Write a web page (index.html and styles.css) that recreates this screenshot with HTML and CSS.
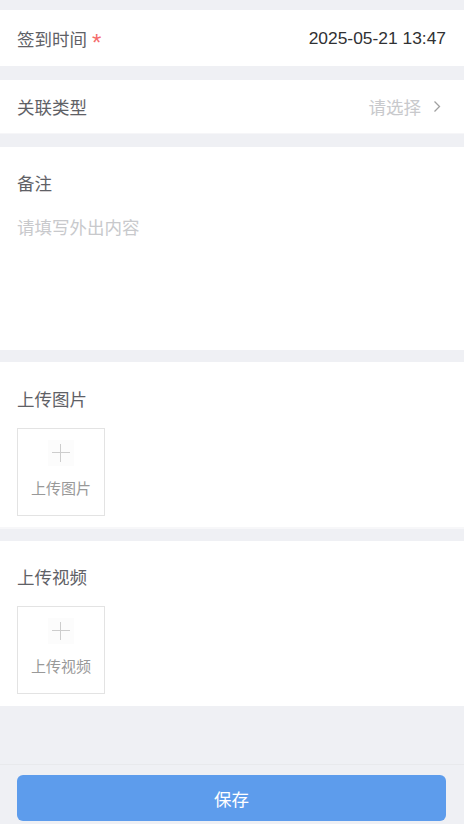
FILE: index.html
```html
<!DOCTYPE html>
<html lang="zh-CN">
<head>
    <meta charset="UTF-8">
    <meta name="viewport" content="width=device-width, initial-scale=1.0">
    <title>外出签到</title>
    <link rel="stylesheet" href="styles.css">
</head>
<body>
    <div class="page">
        <div class="cell cell-time">
            <span class="cell-label">签到时间<span class="required">*</span></span>
            <span class="cell-value">2025-05-21 13:47</span>
        </div>

        <div class="cell cell-type">
            <span class="cell-label">关联类型</span>
            <span class="cell-picker">
                请选择
                <svg class="arrow" width="8" height="13" viewBox="0 0 8 13">
                    <path d="M1.5 1.5 L6.5 6.5 L1.5 11.5" fill="none" stroke="#a0a0a0" stroke-width="1.3"/>
                </svg>
            </span>
        </div>

        <div class="panel panel-remark">
            <div class="panel-title">备注</div>
            <textarea class="remark-input" placeholder="请填写外出内容"></textarea>
        </div>

        <div class="panel panel-upload panel-image">
            <div class="panel-title">上传图片</div>
            <div class="upload-box">
                <span class="plus"></span>
                <span class="upload-text">上传图片</span>
            </div>
        </div>

        <div class="panel panel-upload panel-video">
            <div class="panel-title">上传视频</div>
            <div class="upload-box">
                <span class="plus"></span>
                <span class="upload-text">上传视频</span>
            </div>
        </div>

        <div class="footer">
            <button class="save-btn" type="button">保存</button>
        </div>
    </div>
</body>
</html>
```

FILE: styles.css
```css
body {
    margin: 0;
    padding: 0;
    background-color: #eff0f4;
    font-family: "Liberation Sans", "Noto Sans CJK SC", sans-serif;
    color: #606266;
}

.page {
    display: flex;
    flex-direction: column;
    min-height: 100vh;
    padding-top: 10px;
    box-sizing: border-box;
}

.cell {
    display: flex;
    align-items: center;
    justify-content: space-between;
    background-color: #fff;
    padding: 0 18px 0 17px;
    font-size: 17.5px;
}

.cell-time {
    height: 56px;
}

.cell-type {
    height: 53px;
    margin-top: 14px;
    border-bottom: 1px solid #f6f6f8;
}

.cell-label {
    display: flex;
    align-items: center;
    color: #5f6166;
}

.required {
    color: #f56c6c;
    margin-left: 5px;
    font-size: 24px;
    line-height: 1;
    position: relative;
    top: 5px;
}

.cell-value {
    color: #303133;
    font-size: 17.4px;
}

.cell-picker {
    display: flex;
    align-items: center;
    color: #c8c9cc;
}

.arrow {
    margin-left: 12px;
    margin-right: 5px;
}

.panel {
    background-color: #fff;
    padding: 0 18px 0 17px;
    margin-top: 13px;
}

.panel-title {
    font-size: 17.5px;
    line-height: 24px;
    color: #5f6166;
}

.panel-remark {
    height: 203px;
    padding-top: 25px;
    box-sizing: border-box;
}

.remark-input {
    display: block;
    width: 100%;
    height: 120px;
    margin-top: 20px;
    padding: 0;
    border: none;
    outline: none;
    resize: none;
    font-family: inherit;
    font-size: 17.5px;
    line-height: 24px;
    color: #303133;
}

.remark-input::placeholder {
    color: #c8c9cc;
}

.panel-upload {
    padding-top: 26px;
    padding-bottom: 11px;
}

.panel-image {
    border-bottom: 2px solid #f7f7f9;
    margin-top: 12px;
}

.panel-video {
    padding-top: 25px;
    padding-bottom: 12px;
    margin-top: 12px;
}

.upload-box {
    width: 88px;
    height: 88px;
    margin-top: 16px;
    border: 1px solid #e3e3e3;
    box-sizing: border-box;
    display: flex;
    flex-direction: column;
    align-items: center;
}

.plus {
    position: relative;
    width: 26px;
    height: 26px;
    margin-top: 11px;
    background-color: #fcfcfc;
}

.plus::before,
.plus::after {
    content: "";
    position: absolute;
    background-color: #cdcdcd;
}

.plus::before {
    left: 4px;
    right: 4px;
    top: 12px;
    height: 1px;
}

.plus::after {
    top: 4px;
    bottom: 4px;
    left: 12px;
    width: 1px;
}

.upload-text {
    margin-top: 13px;
    font-size: 15px;
    line-height: 20px;
    color: #999;
}

.footer {
    margin-top: auto;
    border-top: 1px solid #e8e9ec;
    padding: 10px 18px 3px 17px;
}

.save-btn {
    display: block;
    width: 100%;
    height: 46px;
    border: none;
    border-radius: 6px;
    background-color: #5d9cec;
    color: #fff;
    font-family: inherit;
    font-size: 17.5px;
    cursor: pointer;
}
```
